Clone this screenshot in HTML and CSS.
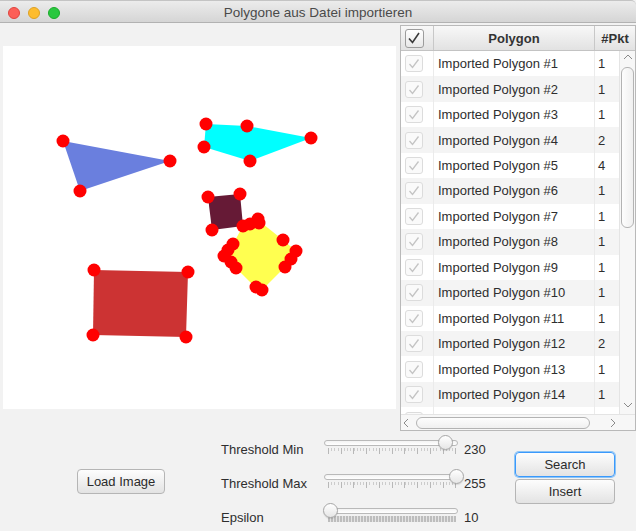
FILE: index.html
```html
<!DOCTYPE html>
<html>
<head>
<meta charset="utf-8">
<title>Polygone aus Datei importieren</title>
<link rel="stylesheet" href="styles.css">
</head>
<body>
<div class="window">
  <div class="titlebar">
    <div class="lights">
      <span class="light l-red"></span><span class="light l-yellow"></span><span class="light l-green"></span>
    </div>
    <div class="title">Polygone aus Datei importieren</div>
    <div></div>
  </div>

  <div class="main">
    <div class="canvas-pane">
      <svg class="canvas" viewBox="3 46 393 363" width="393" height="363">
        <polygon points="63,141 170,161 80,191" fill="#6a7fde"/>
        <polygon points="206,124 247,126 311,138 250,161 204,147" fill="#00ffff"/>
        <polygon points="208,197 240,194 243,226 212,230" fill="#661a36"/>
        <polygon points="258,220 283,240 296,251 291,259 285,267 262,290 255,287 236,268 224,256 233,244 243,226 251,223" fill="#ffff50"/>
        <polygon points="94,270 188,272 186,337 93,335" fill="#cc3333"/>
        <g fill="#ff0000">
          <circle cx="63" cy="141" r="6.5"/><circle cx="170" cy="161" r="6.5"/><circle cx="80" cy="191" r="6.5"/>
          <circle cx="206" cy="124" r="6.5"/><circle cx="247" cy="126" r="6.5"/><circle cx="311" cy="138" r="6.5"/><circle cx="250" cy="161" r="6.5"/><circle cx="204" cy="147" r="6.5"/>
          <circle cx="208" cy="197" r="6.5"/><circle cx="240" cy="194" r="6.5"/><circle cx="212" cy="230" r="6.5"/>
          <circle cx="243" cy="226" r="6.5"/><circle cx="250" cy="224" r="6.5"/><circle cx="258" cy="219" r="6.5"/><circle cx="259" cy="223" r="6.5"/>
          <circle cx="283" cy="240" r="6.5"/><circle cx="296" cy="251" r="6.5"/><circle cx="291" cy="259" r="6.5"/><circle cx="285" cy="267" r="6.5"/>
          <circle cx="256" cy="287" r="6.5"/><circle cx="262" cy="290" r="6.5"/>
          <circle cx="236" cy="268" r="6.5"/><circle cx="231" cy="262" r="6.5"/><circle cx="224" cy="256" r="6.5"/><circle cx="228" cy="250" r="6.5"/><circle cx="233" cy="244" r="6.5"/>
          <circle cx="94" cy="270" r="6.5"/><circle cx="188" cy="272" r="6.5"/><circle cx="186" cy="337" r="6.5"/><circle cx="93" cy="335" r="6.5"/>
        </g>
      </svg>
    </div>

    <div class="table">
      <div class="thead">
        <div class="th th-check">
          <span class="cb cb-head"><svg width="18" height="18" viewBox="0 0 18 18"><polyline points="4,9.5 7.5,13.5 14,4" fill="none" stroke="#3a3a3a" stroke-width="1.6"/></svg></span>
        </div>
        <div class="th th-name">Polygon</div>
        <div class="th th-pkt">#Pkt</div>
      </div>
      <div class="tbody">
        <div class="rows">
          <div class="row"><div class="c-check"><span class="cb"><svg width="18" height="17" viewBox="0 0 18 17"><polyline points="4.5,9 7.5,12.5 13.5,4.5" fill="none" stroke="#c4c4c4" stroke-width="1.3"/></svg></span></div><div class="c-name">Imported Polygon #1</div><div class="c-pkt">1</div></div>
          <div class="row"><div class="c-check"><span class="cb"><svg width="18" height="17" viewBox="0 0 18 17"><polyline points="4.5,9 7.5,12.5 13.5,4.5" fill="none" stroke="#c4c4c4" stroke-width="1.3"/></svg></span></div><div class="c-name">Imported Polygon #2</div><div class="c-pkt">1</div></div>
          <div class="row"><div class="c-check"><span class="cb"><svg width="18" height="17" viewBox="0 0 18 17"><polyline points="4.5,9 7.5,12.5 13.5,4.5" fill="none" stroke="#c4c4c4" stroke-width="1.3"/></svg></span></div><div class="c-name">Imported Polygon #3</div><div class="c-pkt">1</div></div>
          <div class="row"><div class="c-check"><span class="cb"><svg width="18" height="17" viewBox="0 0 18 17"><polyline points="4.5,9 7.5,12.5 13.5,4.5" fill="none" stroke="#c4c4c4" stroke-width="1.3"/></svg></span></div><div class="c-name">Imported Polygon #4</div><div class="c-pkt">2</div></div>
          <div class="row"><div class="c-check"><span class="cb"><svg width="18" height="17" viewBox="0 0 18 17"><polyline points="4.5,9 7.5,12.5 13.5,4.5" fill="none" stroke="#c4c4c4" stroke-width="1.3"/></svg></span></div><div class="c-name">Imported Polygon #5</div><div class="c-pkt">4</div></div>
          <div class="row"><div class="c-check"><span class="cb"><svg width="18" height="17" viewBox="0 0 18 17"><polyline points="4.5,9 7.5,12.5 13.5,4.5" fill="none" stroke="#c4c4c4" stroke-width="1.3"/></svg></span></div><div class="c-name">Imported Polygon #6</div><div class="c-pkt">1</div></div>
          <div class="row"><div class="c-check"><span class="cb"><svg width="18" height="17" viewBox="0 0 18 17"><polyline points="4.5,9 7.5,12.5 13.5,4.5" fill="none" stroke="#c4c4c4" stroke-width="1.3"/></svg></span></div><div class="c-name">Imported Polygon #7</div><div class="c-pkt">1</div></div>
          <div class="row"><div class="c-check"><span class="cb"><svg width="18" height="17" viewBox="0 0 18 17"><polyline points="4.5,9 7.5,12.5 13.5,4.5" fill="none" stroke="#c4c4c4" stroke-width="1.3"/></svg></span></div><div class="c-name">Imported Polygon #8</div><div class="c-pkt">1</div></div>
          <div class="row"><div class="c-check"><span class="cb"><svg width="18" height="17" viewBox="0 0 18 17"><polyline points="4.5,9 7.5,12.5 13.5,4.5" fill="none" stroke="#c4c4c4" stroke-width="1.3"/></svg></span></div><div class="c-name">Imported Polygon #9</div><div class="c-pkt">1</div></div>
          <div class="row"><div class="c-check"><span class="cb"><svg width="18" height="17" viewBox="0 0 18 17"><polyline points="4.5,9 7.5,12.5 13.5,4.5" fill="none" stroke="#c4c4c4" stroke-width="1.3"/></svg></span></div><div class="c-name">Imported Polygon #10</div><div class="c-pkt">1</div></div>
          <div class="row"><div class="c-check"><span class="cb"><svg width="18" height="17" viewBox="0 0 18 17"><polyline points="4.5,9 7.5,12.5 13.5,4.5" fill="none" stroke="#c4c4c4" stroke-width="1.3"/></svg></span></div><div class="c-name">Imported Polygon #11</div><div class="c-pkt">1</div></div>
          <div class="row"><div class="c-check"><span class="cb"><svg width="18" height="17" viewBox="0 0 18 17"><polyline points="4.5,9 7.5,12.5 13.5,4.5" fill="none" stroke="#c4c4c4" stroke-width="1.3"/></svg></span></div><div class="c-name">Imported Polygon #12</div><div class="c-pkt">2</div></div>
          <div class="row"><div class="c-check"><span class="cb"><svg width="18" height="17" viewBox="0 0 18 17"><polyline points="4.5,9 7.5,12.5 13.5,4.5" fill="none" stroke="#c4c4c4" stroke-width="1.3"/></svg></span></div><div class="c-name">Imported Polygon #13</div><div class="c-pkt">1</div></div>
          <div class="row"><div class="c-check"><span class="cb"><svg width="18" height="17" viewBox="0 0 18 17"><polyline points="4.5,9 7.5,12.5 13.5,4.5" fill="none" stroke="#c4c4c4" stroke-width="1.3"/></svg></span></div><div class="c-name">Imported Polygon #14</div><div class="c-pkt">1</div></div>
          <div class="row"><div class="c-check"><span class="cb"><svg width="18" height="17" viewBox="0 0 18 17"><polyline points="4.5,9 7.5,12.5 13.5,4.5" fill="none" stroke="#c4c4c4" stroke-width="1.3"/></svg></span></div><div class="c-name"></div><div class="c-pkt"></div></div>
        </div>
        <div class="vscroll">
          <div class="arrow arrow-up"><svg width="10" height="6" viewBox="0 0 10 6"><polyline points="1,5 5,1 9,5" fill="none" stroke="#8a8a8a" stroke-width="1"/></svg></div>
          <div class="vthumb"></div>
          <div class="spacer"></div>
          <div class="arrow arrow-down"><svg width="10" height="6" viewBox="0 0 10 6"><polyline points="1,1 5,5 9,1" fill="none" stroke="#8a8a8a" stroke-width="1"/></svg></div>
        </div>
      </div>
      <div class="hscroll">
        <div class="harrow"><svg width="6" height="10" viewBox="0 0 6 10"><polyline points="5,1 1,5 5,9" fill="none" stroke="#8a8a8a" stroke-width="1"/></svg></div>
        <div class="hthumb"></div>
        <div class="harrow harrow-right"><svg width="6" height="10" viewBox="0 0 6 10"><polyline points="1,1 5,5 1,9" fill="none" stroke="#8a8a8a" stroke-width="1"/></svg></div>
        <div class="corner"></div>
      </div>
    </div>
  </div>

  <div class="bottom">
    <button class="btn btn-load">Load Image</button>
    <div class="sliders">
      <div class="s-label">Threshold Min</div>
      <div class="slider">
        <div class="track"></div>
        <div class="ticks"></div>
        <div class="thumb" style="left: 113.5px"></div>
      </div>
      <div class="s-value">230</div>

      <div class="s-label">Threshold Max</div>
      <div class="slider">
        <div class="track"></div>
        <div class="ticks"></div>
        <div class="thumb" style="left: 125px"></div>
      </div>
      <div class="s-value">255</div>

      <div class="s-label">Epsilon</div>
      <div class="slider">
        <div class="track"></div>
        <div class="ticks ticks-dense"></div>
        <div class="thumb" style="left: -1.5px"></div>
      </div>
      <div class="s-value">10</div>
    </div>
    <div class="actions">
      <button class="btn btn-action btn-focus">Search</button>
      <button class="btn btn-action">Insert</button>
    </div>
  </div>
</div>
</body>
</html>
```

FILE: styles.css
```css
* { box-sizing: border-box; }
html, body { margin: 0; padding: 0; }
body {
  width: 636px;
  height: 531px;
  overflow: hidden;
  background: #f2f2f2;
  font-family: "Liberation Sans", Arial, sans-serif;
  font-size: 13px;
  color: #333;
}
.window {
  width: 636px;
  height: 531px;
  display: flex;
  flex-direction: column;
}

/* title bar */
.titlebar {
  flex: none;
  height: 23px;
  display: grid;
  grid-template-columns: 1fr auto 1fr;
  align-items: center;
  padding-top: 2px;
  background: linear-gradient(#ececec, #d5d5d5);
  border-top: 1px solid #c4c4c4;
  border-bottom: 1px solid #b2b2b2;
  border-top-right-radius: 5px;
}
.lights {
  display: flex;
  gap: 8px;
  padding-left: 8px;
}
.light {
  width: 12px;
  height: 12px;
  border-radius: 50%;
}
.l-red { background: #fc5f57; border: 1px solid #e0443e; }
.l-yellow { background: #fdbc2e; border: 1px solid #dea123; }
.l-green { background: #2ac840; border: 1px solid #1aab29; }
.title {
  color: #4a4a4a;
  font-size: 13.5px;
}

/* main */
.main {
  flex: none;
  height: 408px;
  display: flex;
  padding-top: 2px;
}
.canvas-pane {
  width: 400px;
  padding: 21px 4px 0 3px;
}
.canvas {
  display: block;
  background: #fff;
}

/* table */
.table {
  width: 236px;
  height: 406px;
  border: 1px solid #b9b9b9;
  background: #fff;
  display: flex;
  flex-direction: column;
}
.thead {
  flex: none;
  height: 25px;
  display: flex;
  background: linear-gradient(#f8f8f8, #e2e2e2);
  border-bottom: 1px solid #c3c3c3;
  font-weight: bold;
  color: #333;
}
.th {
  display: flex;
  align-items: center;
  justify-content: center;
}
.th-check {
  width: 33px;
  border-right: 1px solid #c8c8c8;
  justify-content: flex-start;
  padding-left: 4px;
}
.th-name {
  width: 161px;
  border-right: 1px solid #c8c8c8;
}
.th-pkt { flex: 1; }

.cb {
  display: block;
  width: 18px;
  height: 17px;
  border: 1px solid #dcdcdc;
  border-radius: 3px;
  background: #fafafa;
}
.cb svg { display: block; margin: -1px 0 0 -1px; }
.cb-head {
  width: 19px;
  height: 19px;
  border: 1px solid #9c9c9c;
  background: linear-gradient(#ffffff, #e8e8e8);
}
.tbody {
  flex: none;
  height: 363px;
  display: flex;
}
.rows {
  flex: 1;
  overflow: hidden;
}
.row {
  height: 25.46px;
  display: flex;
  background: #fff;
}
.row:nth-child(even) { background: #f4f4f4; }
.c-check {
  width: 33px;
  border-right: 1px solid #ebebeb;
  display: flex;
  align-items: center;
  padding-left: 4px;
}
.c-name {
  width: 161px;
  border-right: 1px solid #ebebeb;
  display: flex;
  align-items: center;
  padding-left: 4px;
  color: #2e2e2e;
}
.c-pkt {
  flex: 1;
  display: flex;
  align-items: center;
  padding-left: 3px;
  color: #2e2e2e;
}

.vscroll {
  width: 16px;
  display: flex;
  flex-direction: column;
  align-items: center;
  background: #f7f7f7;
  border-left: 1px solid #e4e4e4;
}
.arrow {
  height: 12px;
  display: flex;
  align-items: center;
  justify-content: center;
}
.arrow svg { display: block; }
.vthumb {
  width: 13px;
  height: 161px;
  margin-top: 4px;
  border: 1px solid #b3b3b3;
  border-radius: 6px;
  background: linear-gradient(90deg, #fdfdfd, #f0f0f0);
}
.spacer { flex: 1; }
.arrow-down { margin-bottom: 3px; }

.hscroll {
  flex: none;
  height: 16px;
  display: flex;
  align-items: center;
  background: #f7f7f7;
  border-top: 1px solid #e4e4e4;
}
.harrow {
  width: 10px;
  display: flex;
  justify-content: center;
}
.harrow svg { display: block; }
.hthumb {
  width: 174px;
  height: 12px;
  margin-left: 5px;
  border: 1px solid #b3b3b3;
  border-radius: 6px;
  background: linear-gradient(#fdfdfd, #f0f0f0);
}
.harrow-right { margin-left: 18px; }
.corner { flex: 1; }

/* bottom */
.bottom {
  flex: 1;
  display: flex;
  align-items: flex-start;
}
.btn {
  height: 25px;
  padding: 0;
  font-family: "Liberation Sans", Arial, sans-serif;
  font-size: 13px;
  color: #2b2b2b;
  border: 1px solid #b5b5b5;
  border-radius: 4px;
  background: linear-gradient(#fdfdfd, #e3e3e3);
}
.btn-load {
  width: 88px;
  margin: 38px 0 0 77px;
}
.sliders {
  margin: 1px 0 0 56px;
  display: grid;
  grid-template-columns: 103px 134px 36px;
  grid-auto-rows: 34px;
  align-items: center;
}
.s-label { color: #2e2e2e; }
.s-value { padding-left: 6px; color: #2e2e2e; }
.slider {
  position: relative;
  height: 34px;
  padding-top: 8px;
}
.track {
  height: 6px;
  border: 1px solid #b9b9b9;
  border-radius: 3px;
  background: linear-gradient(#f3f3f3, #ffffff);
}
.ticks {
  height: 6px;
  margin: 2px 2px 0 4px;
  background:
    repeating-linear-gradient(90deg, #b8b8b8 0 1px, transparent 1px 12.75px) 0 0 / 100% 6px no-repeat,
    repeating-linear-gradient(90deg, #cccccc 0 1px, transparent 1px 3.19px) 0 0 / 100% 3px no-repeat;
}
.ticks-dense {
  height: 6px;
  margin-top: 2px;
  background: repeating-linear-gradient(90deg, #bdbdbd 0 2px, #e4e4e4 2px 3px);
}
.thumb {
  position: absolute;
  top: 3px;
  width: 15px;
  height: 15px;
  border-radius: 50%;
  border: 1px solid #a6a6a6;
  background: linear-gradient(#ffffff, #e6e6e6);
  box-shadow: 0 1px 1px rgba(0, 0, 0, 0.12);
}
.actions {
  margin: 21px 0 0 21px;
  display: flex;
  flex-direction: column;
  gap: 2px;
}
.btn-action { width: 100px; }
.btn-focus {
  border-color: #3b99fc;
  box-shadow: 0 0 0 1px #8cc4f5;
}
```
